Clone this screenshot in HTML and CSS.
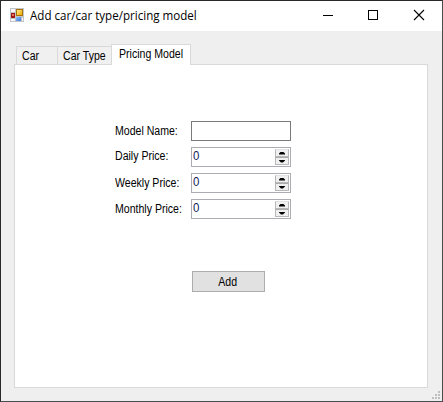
FILE: index.html
```html
<!DOCTYPE html>
<html lang="en">
<head>
<meta charset="utf-8">
<title>Add car/car type/pricing model</title>
<link rel="stylesheet" href="styles.css">
</head>
<body>
<div class="window">
  <header class="titlebar">
    <svg class="app-icon" width="14" height="14" viewBox="0 0 14 14" shape-rendering="crispEdges">
      <defs>
        <linearGradient id="gold" x1="0" y1="0" x2="1" y2="1"><stop offset="0" stop-color="#ffe88a"/><stop offset="1" stop-color="#efa800"/></linearGradient>
        <linearGradient id="blue" x1="0" y1="0" x2="1" y2="1"><stop offset="0" stop-color="#8fc0ff"/><stop offset="1" stop-color="#3c78d8"/></linearGradient>
      </defs>
      <rect width="14" height="14" fill="#c3c5c9"/>
      <path d="M1 1h4v3H1zM1 11h4v2H1zM12 10h1v3h-1z" fill="#f5f6f8"/>
      <rect x="6" y="1" width="7" height="7" fill="#a87408"/>
      <rect x="7" y="2" width="5" height="5" fill="url(#gold)"/>
      <rect x="1" y="5" width="4" height="5" fill="#9c1814"/>
      <rect x="2" y="6" width="2" height="2" fill="#e87060"/>
      <rect x="6" y="9" width="5" height="4" fill="url(#blue)"/>
    </svg>
    <h1 class="title"><span>Add car/car type/pricing model</span></h1>
    <svg class="controls" width="105" height="12" viewBox="0 0 105 12">
      <path d="M2 6.5h10" stroke="#000" shape-rendering="crispEdges"/>
      <rect x="47.5" y="1.5" width="9" height="9" fill="none" stroke="#000" shape-rendering="crispEdges"/>
      <path d="M93 1l10 10M103 1L93 11" stroke="#000" stroke-width="1.1"/>
    </svg>
  </header>
  <main class="client">
    <nav class="tabs">
      <div class="tab tab-car"><span>Car</span></div>
      <div class="tab tab-type"><span>Car Type</span></div>
      <div class="tab active"><span>Pricing Model</span></div>
    </nav>
    <section class="panel">
      <div class="form">
        <label><span>Model Name:</span></label>
        <div class="field text"></div>
        <label class="daily"><span>Daily Price:</span></label>
        <div class="field number"><span class="value">0</span><div class="spinner"><i class="up"></i><i class="down"></i></div></div>
        <label><span>Weekly Price:</span></label>
        <div class="field number"><span class="value">0</span><div class="spinner"><i class="up"></i><i class="down"></i></div></div>
        <label><span>Monthly Price:</span></label>
        <div class="field number"><span class="value">0</span><div class="spinner"><i class="up"></i><i class="down"></i></div></div>
      </div>
      <button class="add"><span>Add</span></button>
    </section>
    <svg class="grip" width="8" height="8" viewBox="0 0 8 8" shape-rendering="crispEdges">
      <path d="M6 0h2v2H6zM3 3h2v2H3zM6 3h2v2H6zM0 6h2v2H0zM3 6h2v2H3zM6 6h2v2H6z" fill="#bfbfbf"/>
    </svg>
  </main>
</div>
</body>
</html>
```
FILE: styles.css
```css
* { box-sizing: border-box; }
body {
  margin: 0;
  font: 12px/14px "Liberation Sans", sans-serif;
  color: #000;
}
.window {
  width: 443px;
  height: 402px;
  display: flex;
  flex-direction: column;
  border: 1px solid #29292b;
  border-right-color: #4a4c50;
  border-bottom-color: #4a4c50;
  background: #efefef;
}
.titlebar {
  height: 30px;
  display: flex;
  align-items: flex-start;
  padding: 7px 16px 0 9px;
  background: #fff;
}
.app-icon { flex: none; }
.title {
  flex: 1;
  margin: 0 0 0 6px;
  font: 12px/16px "Open Sans", sans-serif;
  white-space: nowrap;
}
.controls { flex: none; margin-top: 1px; }
span {
  display: inline-block;
  white-space: nowrap;
  transform-origin: 0 50%;
  transform: scaleX(0.88);
}
.title span { transform: scaleX(0.965); }
.client {
  position: relative;
  flex: 1;
  padding: 13px 14px 13px 13px;
  display: flex;
  flex-direction: column;
}
.tabs {
  display: flex;
  align-items: flex-end;
  height: 21px;
  padding-left: 2px;
  margin-bottom: -1px;
  z-index: 1;
}
.tab {
  height: 18px;
  margin-bottom: 1px;
  padding: 2px 0 0 5px;
  border: 1px solid #d9d9d9;
  border-width: 1px 0 0 1px;
  background: #f0f0f0;
}
.tab-car { width: 41px; }
.tab-type { width: 54px; }
.tab.active {
  width: 80px;
  height: 21px;
  margin-bottom: 0;
  padding: 2px 0 0 7px;
  border-right-width: 1px;
  background: #fff;
}
.panel {
  flex: 1;
  padding: 56px 0 0 100px;
  border: 1px solid #d9d9d9;
  background: #fff;
}
.form {
  display: grid;
  grid-template-columns: 76px 100px;
  grid-auto-rows: 20px;
  row-gap: 6px;
}
label { padding-top: 3px; }
label.daily { padding-top: 2px; }
.field { border: 1px solid #7a7a7a; background: #fff; }
.field.number {
  display: flex;
  justify-content: space-between;
  border-color: #abadb3;
  padding: 1px 1px 1px 1px;
}
.value { color: #10245c; font-size: 13px; }
.spinner {
  width: 14px;
  display: grid;
  grid-template-rows: 8px 8px;
}
.spinner i {
  display: flex;
  justify-content: center;
  align-items: center;
  border: 1px solid #b8b8b8;
  border-top-color: #e3e3e3;
  background: #f0f0f0;
}
.spinner i.down { border-top-color: #acacac; }
.spinner i::before {
  content: "";
  width: 6px;
  height: 3px;
  background: #000;
  clip-path: polygon(34% 0, 66% 0, 100% 70%, 100% 100%, 0 100%, 0 70%);
}
.spinner i.down::before { clip-path: polygon(0 0, 100% 0, 100% 30%, 66% 100%, 34% 100%, 0 30%); }
.add {
  display: block;
  width: 73px;
  height: 21px;
  margin: 52px 0 0 77px;
  padding: 0;
  border: 1px solid #adadad;
  background: #e1e1e1;
  font: inherit;
  color: #000;
}
.add span { transform-origin: 50% 50%; transform: translateX(-1px) scaleX(0.88); }
.grip { position: absolute; right: 2px; bottom: 2px; }
```
